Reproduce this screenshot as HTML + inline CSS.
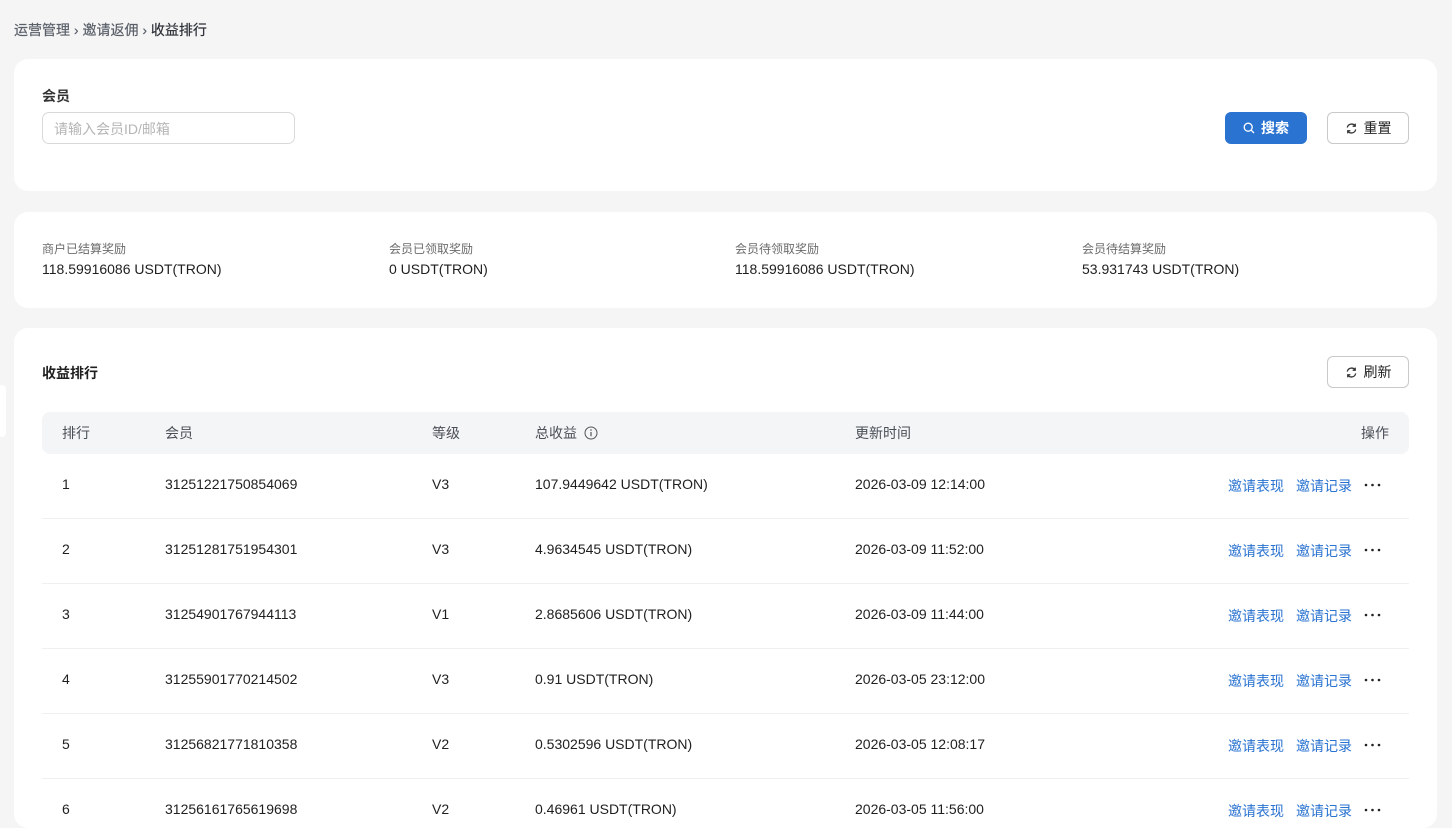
<!DOCTYPE html>
<html><head><meta charset="utf-8"><style>
*{box-sizing:border-box;margin:0;padding:0}
body{width:1452px;height:808px;overflow:hidden;background:#f5f5f5;font-family:"Liberation Sans","Noto Sans CJK SC",sans-serif;color:#1f1f1f;position:relative;font-size:14px}
.a{position:absolute;white-space:nowrap}
.card{position:absolute;left:14px;width:1423px;background:#fff;border-radius:14px}
.btn{position:absolute;height:32px;border-radius:6px;font-size:14px;display:flex;align-items:center;justify-content:center;gap:6px}
.ob{border:1px solid #c9c9c9;background:#fff;color:#222}
.lk{color:#2a73d0}
.line{position:absolute;left:42px;width:1367px;height:1px;background:#f0f0f0}
</style></head><body>
<div class="a" style="left:14px;top:20px;font-size:14px;color:#5a5f69;-webkit-text-stroke:0.2px #5a5f69">运营管理 <span>›</span> 邀请返佣 <span>›</span> <span style="color:#2b2f36;-webkit-text-stroke:0.2px #2b2f36">收益排行</span></div>
<div style="position:absolute;left:0;top:385px;width:6px;height:52px;background:#fff;border-radius:0 4px 4px 0"></div>

<div class="card" style="top:59px;height:132px"></div>
<div class="a" style="left:42px;top:86px;font-size:14px;font-weight:bold;color:#333">会员</div>
<div class="a" style="left:42px;top:112px;width:253px;height:32px;border:1px solid #d9d9d9;border-radius:7px;padding:6px 11px;color:#b5b5b5;font-size:14px">请输入会员ID/邮箱</div>
<div class="btn" style="left:1225px;top:112px;width:82px;background:#2a73d0;color:#fff;font-weight:bold"><svg width="12" height="12" viewBox="0 0 12 12"><circle cx="5.2" cy="5.2" r="4" fill="none" stroke="#fff" stroke-width="1.3"/><path d="M8.2 8.2 11 11" stroke="#fff" stroke-width="1.3"/></svg>搜索</div>
<div class="btn ob" style="left:1327px;top:112px;width:82px"><svg width="13" height="13" viewBox="0 0 14 14" fill="none" stroke="#333" stroke-width="1.4"><path d="M2.5 6A4.6 4.6 0 0 1 11 4.5M11.5 8A4.6 4.6 0 0 1 3 9.5"/><path d="M11 1.8v2.8H8.2M3 12.2V9.4h2.8"/></svg>重置</div>

<div class="card" style="top:212px;height:96px"></div>
<div class="a" style="left:42px;top:240px;font-size:12px;color:#6b6b6b">商户已结算奖励</div>
<div class="a" style="left:42px;top:261px;font-size:14px">118.59916086 USDT(TRON)</div>
<div class="a" style="left:389px;top:240px;font-size:12px;color:#6b6b6b">会员已领取奖励</div>
<div class="a" style="left:389px;top:261px;font-size:14px">0 USDT(TRON)</div>
<div class="a" style="left:735px;top:240px;font-size:12px;color:#6b6b6b">会员待领取奖励</div>
<div class="a" style="left:735px;top:261px;font-size:14px">118.59916086 USDT(TRON)</div>
<div class="a" style="left:1082px;top:240px;font-size:12px;color:#6b6b6b">会员待结算奖励</div>
<div class="a" style="left:1082px;top:261px;font-size:14px">53.931743 USDT(TRON)</div>

<div class="card" style="top:328px;height:500px"></div>
<div class="a" style="left:42px;top:363px;font-size:14px;font-weight:bold">收益排行</div>
<div class="btn ob" style="left:1327px;top:356px;width:82px"><svg width="13" height="13" viewBox="0 0 14 14" fill="none" stroke="#333" stroke-width="1.4"><path d="M2.5 6A4.6 4.6 0 0 1 11 4.5M11.5 8A4.6 4.6 0 0 1 3 9.5"/><path d="M11 1.8v2.8H8.2M3 12.2V9.4h2.8"/></svg>刷新</div>

<div style="position:absolute;left:42px;top:412px;width:1367px;height:42px;background:#f4f5f7;border-radius:8px"></div>
<div class="a" style="left:62px;top:423px;color:#4a4f57">排行</div>
<div class="a" style="left:165px;top:423px;color:#4a4f57">会员</div>
<div class="a" style="left:432px;top:423px;color:#4a4f57">等级</div>
<div class="a" style="left:535px;top:423px;color:#4a4f57">总收益 <svg width="14" height="14" viewBox="0 0 14 14" style="vertical-align:-2px;margin-left:3px"><circle cx="7" cy="7" r="6" fill="none" stroke="#555" stroke-width="1"/><path d="M7 6v4.2" stroke="#555" stroke-width="1.2"/><circle cx="7" cy="4" r=".8" fill="#555"/></svg></div>
<div class="a" style="left:855px;top:423px;color:#4a4f57">更新时间</div>
<div class="a" style="left:1361px;top:423px;color:#4a4f57">操作</div>

<div id="rows"></div>
<script>
var d=[["1","31251221750854069","V3","107.9449642 USDT(TRON)","2026-03-09 12:14:00"],
["2","31251281751954301","V3","4.9634545 USDT(TRON)","2026-03-09 11:52:00"],
["3","31254901767944113","V1","2.8685606 USDT(TRON)","2026-03-09 11:44:00"],
["4","31255901770214502","V3","0.91 USDT(TRON)","2026-03-05 23:12:00"],
["5","31256821771810358","V2","0.5302596 USDT(TRON)","2026-03-05 12:08:17"],
["6","31256161765619698","V2","0.46961 USDT(TRON)","2026-03-05 11:56:00"]];
var h="";
d.forEach(function(r,i){var t=476+i*65;
h+='<div class="a" style="left:62px;top:'+t+'px">'+r[0]+'</div><div class="a" style="left:165px;top:'+t+'px">'+r[1]+'</div><div class="a" style="left:432px;top:'+t+'px">'+r[2]+'</div><div class="a" style="left:535px;top:'+t+'px">'+r[3]+'</div><div class="a" style="left:855px;top:'+t+'px">'+r[4]+'</div><div class="a lk" style="left:1228px;top:'+t+'px">邀请表现</div><div class="a lk" style="left:1296px;top:'+t+'px">邀请记录</div>'+
'<svg class="a" style="left:1364px;top:'+(t+7)+'px" width="18" height="4" viewBox="0 0 18 4"><circle cx="2" cy="2" r="1.3" fill="#222"/><circle cx="8.5" cy="2" r="1.3" fill="#222"/><circle cx="15" cy="2" r="1.3" fill="#222"/></svg>';
if(i<5)h+='<div class="line" style="top:'+(518+i*65)+'px"></div>';});
document.getElementById('rows').innerHTML=h;
</script>
</body></html>
